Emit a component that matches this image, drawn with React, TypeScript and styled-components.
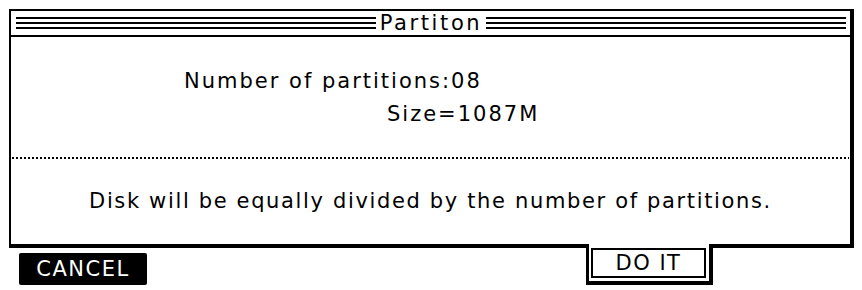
import styled, { createGlobalStyle } from "styled-components";

const GlobalStyle = createGlobalStyle`
  html, body {
    margin: 0;
    padding: 0;
    background: #fff;
  }
  body {
    font-family: "DejaVu Sans", "Liberation Sans", sans-serif;
    color: #000;
  }
`;

const Screen = styled.div`
  padding: 9px;
  width: 862px;
  height: 290px;
  box-sizing: border-box;
  background: #fff;
`;

const Window = styled.div`
  width: 845px;
  box-sizing: border-box;
  border-style: solid;
  border-color: #000;
  border-width: 2px 4px 4px 2px;
  background: #fff;
`;

const TitleBar = styled.div`
  height: 24px;
  border-bottom: 2px solid #000;
  padding: 0 4px 0 5px;
  display: flex;
  align-items: center;
  gap: 4px;
`;

// three 2px strokes, 3px apart
const Rule = styled.div`
  flex: 1;
  height: 12px;
  box-sizing: border-box;
  border-top: 2px solid #000;
  border-bottom: 2px solid #000;
  padding-top: 3px;

  &::before {
    content: "";
    display: block;
    height: 2px;
    background: #000;
  }
`;

const Title = styled.span`
  font-size: 21px;
  line-height: 24px;
  letter-spacing: 2.6px;
`;

const Settings = styled.div`
  height: 120px;
  box-sizing: border-box;
  padding-top: 32px;
  display: flex;
  flex-direction: column;
  gap: 9px;
`;

const Field = styled.div<{ $indent: number }>`
  padding-left: ${(p) => p.$indent}px;
  font-size: 21px;
  line-height: 24px;
  letter-spacing: 2px;
  white-space: nowrap;
`;

const Dotted = styled.div`
  height: 2px;
  margin: 0 1px;
  background: repeating-linear-gradient(
    to right,
    #000 0 2px,
    transparent 2px 4px
  );
`;

const Note = styled.div`
  height: 85px;
  box-sizing: border-box;
  padding-top: 30px;
  text-align: center;
  font-size: 21px;
  line-height: 24px;
  letter-spacing: 1.65px;
  white-space: nowrap;
`;

const Footer = styled.div`
  display: flex;
  align-items: flex-start;
  margin-top: -4px;
`;

const CancelButton = styled.div`
  margin: 9px 0 0 10px;
  width: 128px;
  height: 32px;
  background: #000;
  color: #fff;
  border-radius: 2px;
  display: flex;
  align-items: center;
  justify-content: center;
  font-size: 21px;
  letter-spacing: 1.5px;
`;

const DefaultTab = styled.div`
  margin-left: 439px;
  width: 127px;
  height: 41px;
  box-sizing: border-box;
  background: #fff;
  border-style: solid;
  border-color: #000;
  border-width: 0 4px 4px 3px;
  padding: 4px 3px 3px 2px;
`;

const DefaultButton = styled.div`
  height: 100%;
  box-sizing: border-box;
  border: 2px solid #000;
  display: flex;
  align-items: center;
  justify-content: center;
  font-size: 21px;
  letter-spacing: 1.5px;
`;

const App = () => {
  return (
    <Screen>
      <GlobalStyle />
      <Window>
        <TitleBar>
          <Rule />
          <Title>Partiton</Title>
          <Rule />
        </TitleBar>
        <Settings>
          <Field $indent={173}>Number of partitions:08</Field>
          <Field $indent={376}>Size=1087M</Field>
        </Settings>
        <Dotted />
        <Note>Disk will be equally divided by the number of partitions.</Note>
      </Window>
      <Footer>
        <CancelButton>CANCEL</CancelButton>
        <DefaultTab>
          <DefaultButton>DO IT</DefaultButton>
        </DefaultTab>
      </Footer>
    </Screen>
  );
};

export default App;
